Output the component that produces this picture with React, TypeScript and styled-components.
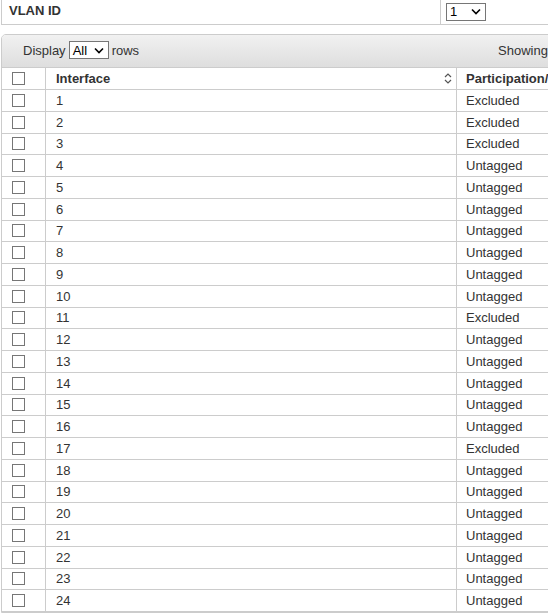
import React from "react";
import styled, { createGlobalStyle } from "styled-components";

const GlobalStyle = createGlobalStyle`
    html, body {
        margin: 0;
        padding: 0;
        background: #ffffff;
        overflow: hidden;
    }
    body {
        font-family: "Liberation Sans", Arial, sans-serif;
        font-size: 13px;
        color: #333333;
    }
`;

const Page = styled.div`
    width: 720px;
    margin-left: 1px;
`;

const VlanRow = styled.div`
    display: grid;
    grid-template-columns: 439px 1fr;
    height: 25px;
    border-left: 1px solid #cccccc;
    border-bottom: 1px solid #cccccc;
    box-sizing: border-box;
`;

const VlanLabel = styled.div`
    display: flex;
    align-items: center;
    padding-left: 7px;
    padding-bottom: 3px;
    font-weight: bold;
    color: #333333;
    border-right: 1px solid #cccccc;
`;

const VlanValue = styled.div`
    display: flex;
    align-items: center;
    padding-left: 5px;
    padding-bottom: 1px;
`;

const FakeSelect = styled.div<{ $width: number }>`
    display: flex;
    align-items: center;
    justify-content: space-between;
    box-sizing: border-box;
    width: ${(p) => p.$width}px;
    height: 18px;
    padding: 0 4px 0 3px;
    border: 1px solid #767676;
    background: #ffffff;
    color: #000000;
    font-size: 13px;
`;

const TableWrap = styled.div`
    margin-top: 9px;
    border: 1px solid #cccccc;
    border-top-left-radius: 5px;
    border-top-right-radius: 5px;
    overflow: hidden;
`;

const Toolbar = styled.div`
    display: grid;
    grid-template-columns: 496px 1fr;
    align-items: center;
    height: 32px;
    background: linear-gradient(#f1f1f1, #dedede);
    border-bottom: 1px solid #cccccc;
    color: #333333;
`;

const Length = styled.div`
    display: flex;
    align-items: center;
    gap: 3px;
    padding-left: 21px;
    padding-bottom: 2px;
`;

const Info = styled.div`
    padding-bottom: 2px;
    white-space: nowrap;
`;

const Row = styled.div<{ $head?: boolean }>`
    display: grid;
    grid-template-columns: 43px 411px 1fr;
    height: ${(p) => (p.$head ? "22px" : "21.75px")};
    box-sizing: border-box;
    border-bottom: 1px solid #cccccc;
    font-weight: ${(p) => (p.$head ? "bold" : "normal")};
    background: #ffffff;
`;

const Cell = styled.div<{ $sort?: boolean }>`
    display: flex;
    align-items: center;
    justify-content: ${(p) => (p.$sort ? "space-between" : "flex-start")};
    padding: 0 4px 0 10px;
    white-space: nowrap;
    overflow: hidden;
    & + & {
        border-left: 1px solid #cccccc;
    }
    & + & + & {
        padding-left: 9px;
    }
`;

const Check = styled.span`
    display: inline-block;
    box-sizing: border-box;
    width: 13px;
    height: 13px;
    border: 1px solid #767676;
    background: #ffffff;
`;

const Chevron = () => (
    <svg width="10" height="7" viewBox="0 0 10 7">
        <path d="M1 1.5 L5 5.5 L9 1.5" fill="none" stroke="#000" strokeWidth="1.6" />
    </svg>
);

const SortIcon = () => (
    <svg width="8" height="11" viewBox="0 0 8 11">
        <path d="M1 4 L4 1 L7 4 M1 7 L4 10 L7 7" fill="none" stroke="#555" strokeWidth="1.2" />
    </svg>
);

const participation = [
    "Excluded", "Excluded", "Excluded", "Untagged", "Untagged", "Untagged",
    "Untagged", "Untagged", "Untagged", "Untagged", "Excluded", "Untagged",
    "Untagged", "Untagged", "Untagged", "Untagged", "Excluded", "Untagged",
    "Untagged", "Untagged", "Untagged", "Untagged", "Untagged", "Untagged",
];

export default function App() {
    return <Page>
        <GlobalStyle />
        <VlanRow>
            <VlanLabel>VLAN ID</VlanLabel>
            <VlanValue>
                <FakeSelect $width={40}>
                    <span>1</span>
                    <Chevron />
                </FakeSelect>
            </VlanValue>
        </VlanRow>
        <TableWrap>
            <Toolbar>
                <Length>
                    Display
                    <FakeSelect $width={40}>
                        <span>All</span>
                        <Chevron />
                    </FakeSelect>
                    rows
                </Length>
                <Info>Showing 1 to 24 of 24 entries</Info>
            </Toolbar>
            <Row $head>
                <Cell><Check /></Cell>
                <Cell $sort>Interface<SortIcon /></Cell>
                <Cell>Participation/Tagging</Cell>
            </Row>
            {participation.map((value, i) => (
                <Row key={i}>
                    <Cell><Check /></Cell>
                    <Cell>{i + 1}</Cell>
                    <Cell>{value}</Cell>
                </Row>
            ))}
        </TableWrap>
    </Page>;
}
